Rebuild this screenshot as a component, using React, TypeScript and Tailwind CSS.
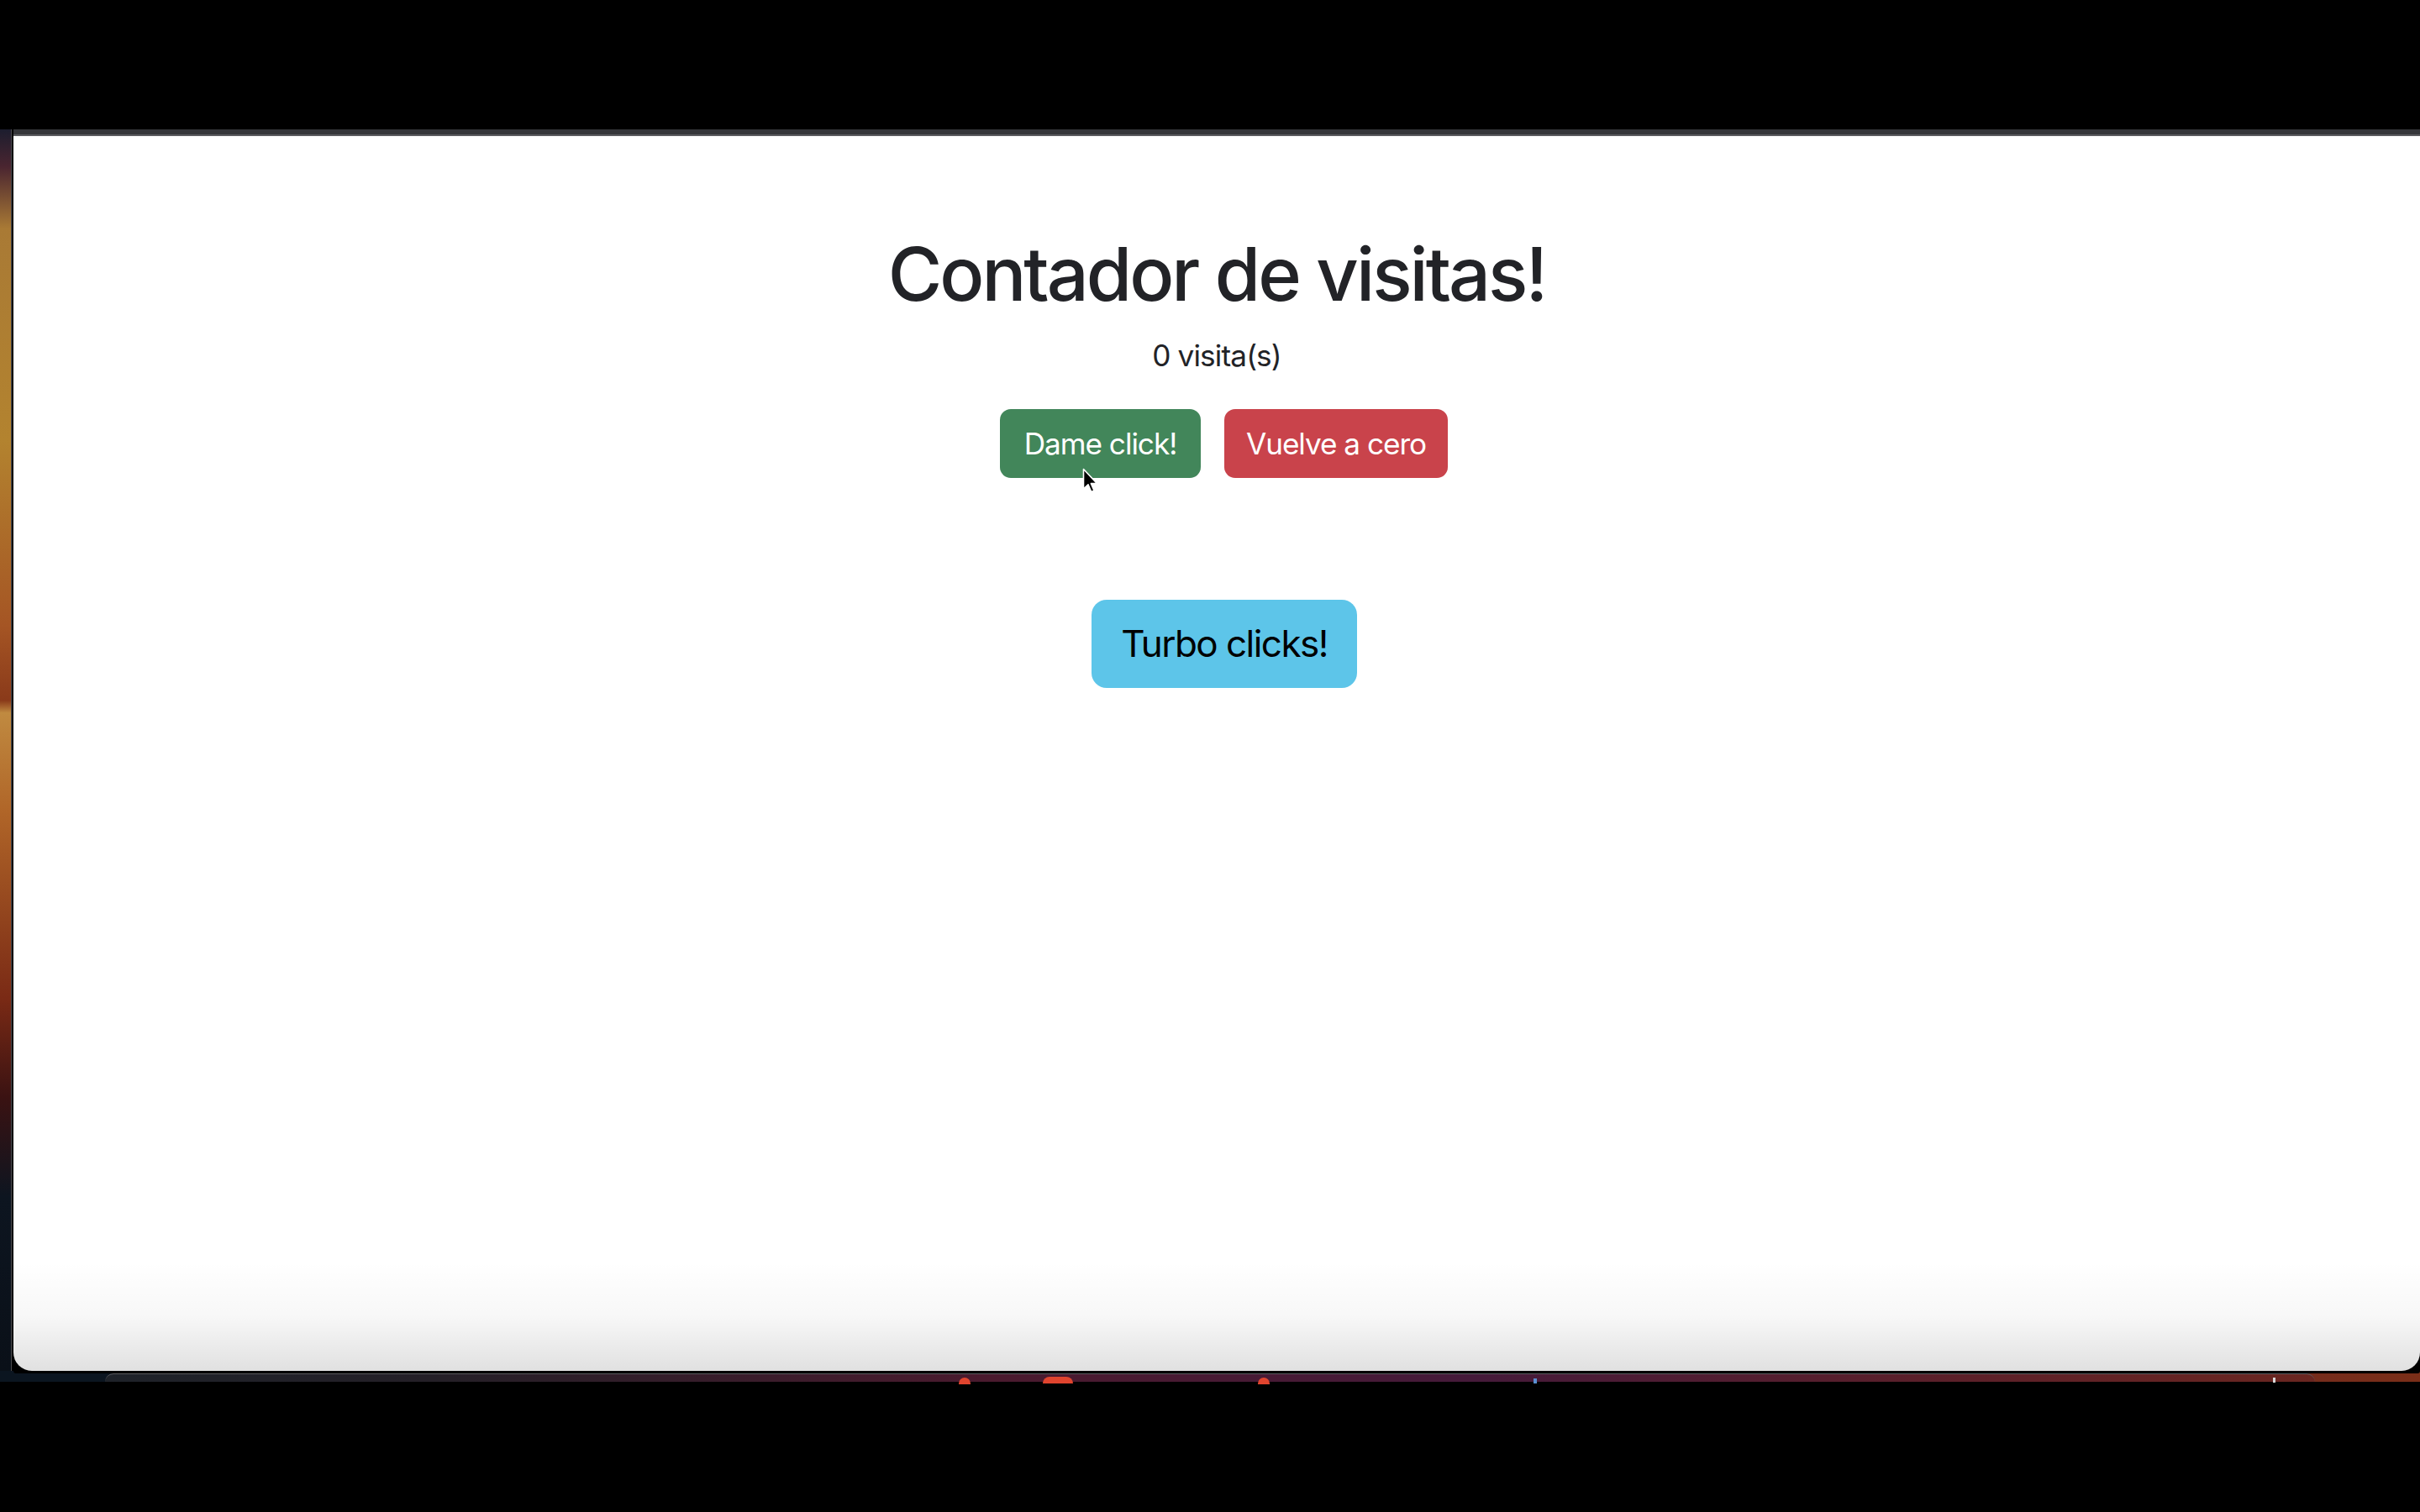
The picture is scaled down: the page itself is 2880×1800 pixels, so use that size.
import React, { useState } from 'react';

const wallpaper =
  'bg-[linear-gradient(to_bottom,#1c1d2e_0%,#4a2530_3%,#a97a35_8%,#b3832f_25%,#a55524_40%,#8a3a1a_46%,#c08a40_47%,#b06528_55%,#7a2a15_70%,#3a1212_78%,#0d1520_86%,#0a1018_100%)]';

const Cursor: React.FC = () => (
  <svg
    className="pointer-events-none absolute left-[1288px] top-[557px]"
    width="20"
    height="31"
    viewBox="0 0 20 31"
  >
    <path
      d="M1.5 1.5 L1.5 25 L7 19.8 L10.6 28.4 L14 27 L10.4 18.6 L17.6 18.6 Z"
      fill="#000"
      stroke="#fff"
      strokeWidth="1.6"
      strokeLinejoin="round"
    />
  </svg>
);

const App: React.FC = () => {
  const [visits, setVisits] = useState(0);

  return (
    <div className="relative flex h-[1800px] w-[2880px] flex-col overflow-hidden bg-black font-['Inter','Liberation_Sans',sans-serif]">
      {/* top black band */}
      <div className="h-[154px] shrink-0" />

      {/* wallpaper edge + browser window */}
      <div className="flex h-[1478px] shrink-0">
        <div className={`w-[13px] ${wallpaper}`} />
        <div className="w-px bg-[#4b4b4f]" />
        <div className="w-[2px] bg-black" />

        <main className="relative flex flex-1 flex-col overflow-hidden rounded-b-[22px] bg-white">
          <div className="h-[6px] bg-[#35363a]" />
          <div className="h-[2px] bg-[#5b5b5f]" />

          <div className="flex flex-col items-center pt-[112px] text-center">
            <h1 className="text-[88px] font-medium leading-[1.2] tracking-[-0.034em] text-[#222327]">
              Contador de visitas!
            </h1>
            <p className="mt-[17.6px] text-[35.2px] leading-[1.5] tracking-[-0.025em] text-[#222327]">
              {visits} visita(s)
            </p>

            <div className="mt-[37px] flex gap-[28px] pl-[17px]">
              <button
                onClick={() => setVisits(v => v + 1)}
                className="flex h-[82px] w-[239px] items-center justify-center rounded-[13px] bg-[#42865a] text-[35.2px] tracking-[-0.03em] text-white"
              >
                Dame click!
              </button>
              <button
                onClick={() => setVisits(0)}
                className="flex h-[82px] w-[266px] items-center justify-center rounded-[13px] bg-[#c9434b] text-[35.2px] tracking-[-0.03em] text-white"
              >
                Vuelve a cero
              </button>
            </div>

            <div className="mt-[145px] pl-[18px]">
              <button
                onClick={() => setVisits(v => v + 10)}
                className="flex h-[105px] w-[316px] items-center justify-center rounded-[18px] bg-[#5dc5e9] text-[44px] tracking-[-0.035em] text-black"
              >
                Turbo clicks!
              </button>
            </div>
          </div>

          {/* bottom shadow of the window */}
          <div className="pointer-events-none absolute inset-x-0 bottom-0 h-[130px] bg-linear-to-b from-transparent via-black/[0.03] to-black/[0.12]" />
        </main>
      </div>

      {/* dock strip below the window */}
      <div className="flex h-[13px] shrink-0 flex-col bg-[linear-gradient(to_right,#0b1520_0%,#0b1520_4%,#3a1a28_40%,#5a2030_70%,#7a2e18_100%)]">
        <div className="ml-[16px] h-[3px] rounded-b-[3px] bg-black" />
        <div className="flex flex-1 px-[125px]">
          <div className="relative flex-1 rounded-t-[10px] border-t border-[#5a5a5e] bg-[linear-gradient(to_right,#1e2229_0%,#241f27_15%,#4a1a2e_40%,#451a3a_62%,#5a1f2a_82%,#6a2620_100%)]">
            <span className="absolute left-[1016px] top-[4px] h-[8px] w-[14px] rounded-t-full bg-[#e0442e]" />
            <span className="absolute left-[1116px] top-[3px] h-[8px] w-[36px] rounded-t-full bg-[#e0442e]" />
            <span className="absolute left-[1372px] top-[4px] h-[8px] w-[14px] rounded-t-full bg-[#e0442e]" />
            <span className="absolute left-[1700px] top-[5px] h-[6px] w-[4px] bg-[#5a8fd0]" />
            <span className="absolute left-[2580px] top-[4px] h-[6px] w-[3px] bg-[#d8d8d8]" />
          </div>
        </div>
      </div>

      <div className="flex-1" />

      <Cursor />
    </div>
  );
};

export default App;
